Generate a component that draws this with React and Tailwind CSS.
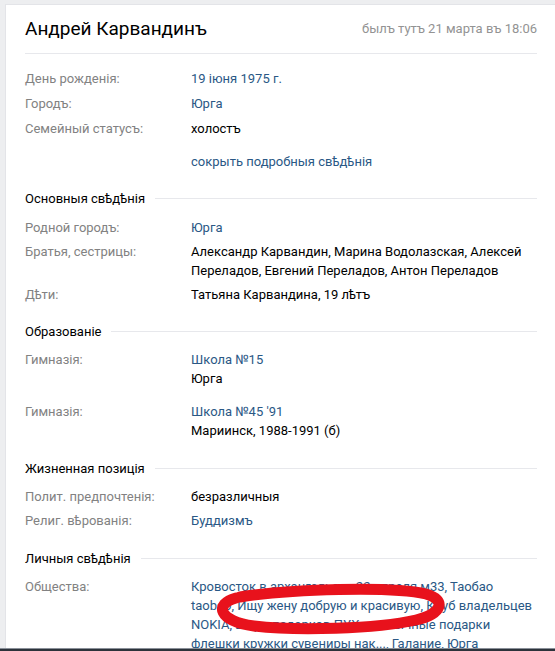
import React from "react";

const LINK = "text-[#2a5885]";

function Row({ label, className = "", children }) {
  return (
    <div className={`flex leading-[19px] ${className}`}>
      <div className="w-[166px] shrink-0 text-[#828282]">{label}</div>
      <div className="flex-1 min-w-0">{children}</div>
    </div>
  );
}

function SectionTitle({ title, className = "" }) {
  return (
    <div className={`flex items-center leading-[19px] ${className}`}>
      <span className="text-black">{title}</span>
      <div className="flex-1 h-px bg-[#e7e8ec] ml-[10px]" />
    </div>
  );
}

export default function App() {
  return (
    <div className="relative w-[555px] h-[651px] overflow-hidden bg-[#edeef0] flex flex-col font-['Roboto',sans-serif] text-[13px]">
      <div className="flex-1 min-h-0 overflow-hidden pl-[5px] pt-[4px]">
        <div className="bg-white border-l border-t border-[#e3e4e8] pl-[19px] pr-[18px] h-full">
          <div className="h-[49px] border-b border-[#e7e8ec] flex items-center justify-between">
            <h1 className="text-[19px] text-black leading-[24px]">Андрей Карвандинъ</h1>
            <span className="text-[#939393]">былъ тутъ 21 марта въ 18:06</span>
          </div>

          <div className="pt-[15px]">
            <Row label="День рожденія:">
              <span className={LINK}>19 іюня 1975 г.</span>
            </Row>
            <Row label="Городъ:" className="mt-[6px]">
              <span className={LINK}>Юрга</span>
            </Row>
            <Row label="Семейный статусъ:" className="mt-[6px]">
              <span className="text-black">холостъ</span>
            </Row>
            <div className="pl-[166px] mt-[14px] leading-[19px]">
              <span className={LINK}>сокрыть подробныя свѣдѣнія</span>
            </div>

            <SectionTitle title="Основныя свѣдѣнія" className="mt-[18px]" />
            <Row label="Родной городъ:" className="mt-[10px]">
              <span className={LINK}>Юрга</span>
            </Row>
            <Row label="Братья, сестрицы:" className="mt-[5px]">
              <span className="text-black">
                Александр Карвандин, Марина Водолазская, Алексей
                <br />
                Переладов, Евгений Переладов, Антон Переладов
              </span>
            </Row>
            <Row label="Дѣти:" className="mt-[5px]">
              <span className="text-black">Татьяна Карвандина, 19 лѣтъ</span>
            </Row>

            <SectionTitle title="Образованіе" className="mt-[18px]" />
            <Row label="Гимназія:" className="mt-[9px]">
              <div className={LINK}>Школа №15</div>
              <div className="text-black">Юрга</div>
            </Row>
            <Row label="Гимназія:" className="mt-[14px]">
              <div className={LINK}>Школа №45 '91</div>
              <div className="text-black">Мариинск, 1988-1991 (б)</div>
            </Row>

            <SectionTitle title="Жизненная позиція" className="mt-[19px]" />
            <Row label="Полит. предпочтенія:" className="mt-[9px]">
              <span className="text-black">безразличныя</span>
            </Row>
            <Row label="Религ. вѣрованія:" className="mt-[5px]">
              <span className={LINK}>Буддизмъ</span>
            </Row>

            <SectionTitle title="Личныя свѣдѣнія" className="mt-[19px]" />
            <Row label="Общества:" className="mt-[9px]">
              <div className={LINK}>
                <div>Кровосток в архангельске 22 апреля м33, Таобао</div>
                <div>taobao, Ищу жену добрую и красивую, Клуб владельцев</div>
                <div>NOKIA, Бюро подарков ПУХ, необычные подарки</div>
                <div>флешки кружки сувениры нак..., Галание, Юрга</div>
              </div>
            </Row>
          </div>
        </div>
      </div>
      <div className="h-[3px] shrink-0 bg-[#2c323a] border-t border-[#8a9099]" />

      <svg
        className="absolute inset-0 pointer-events-none"
        width="555"
        height="651"
        viewBox="0 0 555 651"
      >
        <path
          d="M 240 597 C 290 589, 392 586, 426 594 C 447 600, 442 614, 416 620 C 376 629, 296 631, 254 626 C 218 621, 214 604, 236 598"
          fill="none"
          stroke="#e8121c"
          strokeWidth="11"
          strokeLinecap="round"
          strokeLinejoin="round"
        />
      </svg>
    </div>
  );
}
